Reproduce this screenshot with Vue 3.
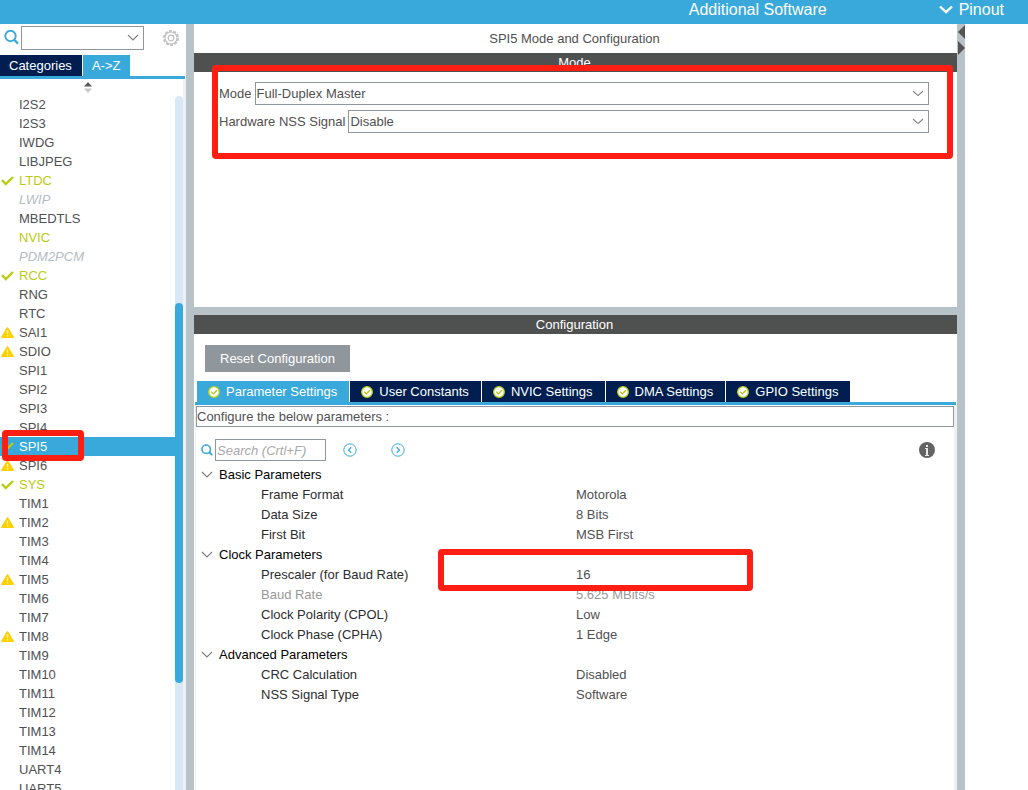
<script setup>
import { ref } from 'vue'

const peripherals = [
  { name: 'I2S2' },
  { name: 'I2S3' },
  { name: 'IWDG' },
  { name: 'LIBJPEG' },
  { name: 'LTDC', state: 'on', icon: 'check' },
  { name: 'LWIP', state: 'off' },
  { name: 'MBEDTLS' },
  { name: 'NVIC', state: 'on' },
  { name: 'PDM2PCM', state: 'off' },
  { name: 'RCC', state: 'on', icon: 'check' },
  { name: 'RNG' },
  { name: 'RTC' },
  { name: 'SAI1', icon: 'warn' },
  { name: 'SDIO', icon: 'warn' },
  { name: 'SPI1' },
  { name: 'SPI2' },
  { name: 'SPI3' },
  { name: 'SPI4' },
  { name: 'SPI5', state: 'selected', icon: 'check', marked: true },
  { name: 'SPI6', icon: 'warn' },
  { name: 'SYS', state: 'on', icon: 'check' },
  { name: 'TIM1' },
  { name: 'TIM2', icon: 'warn' },
  { name: 'TIM3' },
  { name: 'TIM4' },
  { name: 'TIM5', icon: 'warn' },
  { name: 'TIM6' },
  { name: 'TIM7' },
  { name: 'TIM8', icon: 'warn' },
  { name: 'TIM9' },
  { name: 'TIM10' },
  { name: 'TIM11' },
  { name: 'TIM12' },
  { name: 'TIM13' },
  { name: 'TIM14' },
  { name: 'UART4' },
  { name: 'UART5' }
]

const tabs = ['Parameter Settings', 'User Constants', 'NVIC Settings', 'DMA Settings', 'GPIO Settings']
const activeTab = ref('Parameter Settings')

const groups = [
  {
    title: 'Basic Parameters',
    rows: [
      { name: 'Frame Format', value: 'Motorola' },
      { name: 'Data Size', value: '8 Bits' },
      { name: 'First Bit', value: 'MSB First' }
    ]
  },
  {
    title: 'Clock Parameters',
    rows: [
      { name: 'Prescaler (for Baud Rate)', value: '16', marked: true },
      { name: 'Baud Rate', value: '5.625 MBits/s', muted: true },
      { name: 'Clock Polarity (CPOL)', value: 'Low' },
      { name: 'Clock Phase (CPHA)', value: '1 Edge' }
    ]
  },
  {
    title: 'Advanced Parameters',
    rows: [
      { name: 'CRC Calculation', value: 'Disabled' },
      { name: 'NSS Signal Type', value: 'Software' }
    ]
  }
]

const filter = ref('')
const mode = ref('Full-Duplex Master')
const nss = ref('Disable')
const query = ref('')
</script>

<template>
  <div class="app">
    <header class="topbar">
      <button class="top-item" type="button">Additional Software</button>
      <button class="top-item pinout" type="button">
        <svg width="14" height="9" viewBox="0 0 14 9"><path d="M1 1.500 7 7.200 13 1.500" fill="none" stroke="#fff" stroke-width="2.400" /></svg>
        Pinout
      </button>
    </header>

    <div class="workspace">
      <aside class="sidebar">
        <div class="filter">
          <svg class="lens" width="16" height="16" viewBox="0 0 16 16"><circle cx="6.5" cy="6" r="5.2" fill="none" stroke="#39a9dc" stroke-width="1.9" /><path d="M10 9.600 14 13.600" stroke="#39a9dc" stroke-width="2.200" /></svg>
          <span class="combo">
            <select v-model="filter" aria-label="Filter peripherals"><option value=""></option></select>
            <svg class="arrow" width="12" height="7" viewBox="0 0 12 7"><path d="M1 1 6 6 11 1" fill="none" stroke="#808080" stroke-width="1.2" /></svg>
          </span>
          <button class="gear" type="button" aria-label="Settings">
            <svg width="18" height="18" viewBox="0 0 18 18" fill="none" stroke="#c2c2c2">
              <circle cx="9" cy="9" r="7.1" stroke-width="1.8" stroke-dasharray="3 1.46" />
              <circle cx="9" cy="9" r="6" stroke-width="1.1" />
              <circle cx="9" cy="9" r="2.8" stroke-width="1.2" />
            </svg>
          </button>
        </div>
        <nav class="side-tabs">
          <button type="button">Categories</button>
          <button type="button" class="active">A-&gt;Z</button>
        </nav>
        <div class="list-area">
          <div class="list-column">
            <button class="sorter" type="button" aria-label="Sort">
              <svg width="8" height="11" viewBox="0 0 8 11"><path d="M0 4.5 4 0 8 4.5Z" fill="#5a5a5a" /><path d="M0 6.5 4 11 8 6.5Z" fill="#c9c9c9" /></svg>
            </button>
            <ul class="list">
              <li v-for="p in peripherals" :key="p.name" :class="p.state">
                <span class="mark">
                  <svg v-if="p.icon === 'check'" width="13" height="10" viewBox="0 0 13 10"><path d="M1 4.2 4.8 8 12 1" fill="none" stroke="#b9cc10" stroke-width="2.4" /></svg>
                  <svg v-else-if="p.icon === 'warn'" width="13" height="11" viewBox="0 0 13 11"><path d="M6.5.8 12.2 10.2H.8Z" fill="#fdd000" stroke="#fdd000" stroke-width="1.4" stroke-linejoin="round" /><path d="M6.5 3.4V7M6.5 8.1V9.5" stroke="#fff6c0" stroke-width="1.3" /></svg>
                </span>
                {{ p.name }}
                <span v-if="p.marked" class="highlight highlight-item"></span>
              </li>
            </ul>
          </div>
          <div class="track"><div class="thumb"></div></div>
        </div>
      </aside>

      <main class="panel">
        <section class="mode-pane">
          <h1>SPI5 Mode and Configuration</h1>
          <h2>Mode</h2>
          <form class="mode-form">
            <div class="field">
              <label for="mode">Mode</label>
              <span class="combo">
                <select id="mode" v-model="mode"><option>Full-Duplex Master</option></select>
                <svg class="arrow" width="12" height="7" viewBox="0 0 12 7"><path d="M1 1 6 5.6 11 1" fill="none" stroke="#808080" stroke-width="1.1" /></svg>
              </span>
            </div>
            <div class="field">
              <label for="nss">Hardware NSS Signal</label>
              <span class="combo">
                <select id="nss" v-model="nss"><option>Disable</option></select>
                <svg class="arrow" width="12" height="7" viewBox="0 0 12 7"><path d="M1 1 6 5.6 11 1" fill="none" stroke="#808080" stroke-width="1.1" /></svg>
              </span>
            </div>
            <span class="highlight highlight-form"></span>
          </form>
        </section>

        <section class="config-pane">
          <h2>Configuration</h2>
          <button class="reset" type="button">Reset Configuration</button>
          <nav class="tabs">
            <button v-for="t in tabs" :key="t" type="button" :class="{ active: t === activeTab }" @click="activeTab = t">
              <svg width="12" height="12" viewBox="0 0 12 12"><circle cx="6" cy="6" r="5.3" fill="#fff" stroke="#bccf1e" stroke-width="1.3" /><path d="M3.2 5.6 5.4 7.9 8.9 4.2" fill="none" stroke="#b4c70e" stroke-width="1.3" /></svg>
              {{ t }}
            </button>
          </nav>
          <div class="config-body">
            <p class="hint">Configure the below parameters :</p>
            <div class="tools">
              <svg width="12" height="12" viewBox="0 0 12 12"><circle cx="5.2" cy="5.2" r="4.200" fill="none" stroke="#39a9dc" stroke-width="1.6" /><path d="M8 8 11.200 11.200" stroke="#39a9dc" stroke-width="1.9" /></svg>
              <input v-model="query" type="text" placeholder="Search (Crtl+F)" aria-label="Search" />
              <button type="button" aria-label="Previous"><svg width="14" height="14" viewBox="0 0 14 14" fill="none" stroke="#39a9dc"><circle cx="7" cy="7" r="6.2" /><path d="M8.3 4.2 5.5 7 8.3 9.8" stroke-width="1.3" /></svg></button>
              <button type="button" class="next" aria-label="Next"><svg width="14" height="14" viewBox="0 0 14 14" fill="none" stroke="#39a9dc"><circle cx="7" cy="7" r="6.2" /><path d="M5.7 4.2 8.5 7 5.7 9.8" stroke-width="1.3" /></svg></button>
              <button type="button" class="info" aria-label="Information"><svg width="16" height="16" viewBox="0 0 16 16"><circle cx="8" cy="8" r="8" fill="#636363" /><path d="M7 3H9V5H7ZM6 6H9V13H10V14H6V13H7V7H6Z" fill="#e8e8e8" /></svg></button>
            </div>
            <table class="params">
              <tbody v-for="g in groups" :key="g.title">
                <tr>
                  <th colspan="2" scope="rowgroup">
                    <svg width="12" height="7" viewBox="0 0 12 7"><path d="M1 1 6 6 11 1" fill="none" stroke="#808080" stroke-width="1.2" /></svg>{{ g.title }}
                  </th>
                </tr>
                <tr v-for="r in g.rows" :key="r.name" :class="{ muted: r.muted }">
                  <td class="name">{{ r.name }}</td>
                  <td class="value">{{ r.value }}<span v-if="r.marked" class="highlight highlight-value"></span></td>
                </tr>
              </tbody>
            </table>
          </div>
        </section>
      </main>

      <div class="splitter">
        <svg width="8" height="32" viewBox="0 0 8 32"><path d="M8 1V15L1 8Z" fill="#555" /><path d="M1 17V31L8 24Z" fill="#555" /></svg>
      </div>
      <div class="pinout-view"></div>
    </div>
  </div>
</template>

<style>
body {
  background: #fff;
}
</style>

<style scoped>
* {
  box-sizing: border-box;
}
.app {
  display: flex;
  flex-direction: column;
  height: 100vh;
  overflow: hidden;
  font: 13px/19px "Liberation Sans", Arial, sans-serif;
  color: #505052;
}
button,
select,
input {
  font: inherit;
  color: inherit;
  border: 0;
  border-radius: 0;
  background: none;
  padding: 0;
  margin: 0;
}
svg {
  display: block;
  flex: none;
}
h1,
h2,
p,
ul {
  margin: 0;
  padding: 0;
  font-size: 13px;
  font-weight: 400;
}
.topbar {
  flex: none;
  display: flex;
  justify-content: flex-end;
  height: 24px;
  padding-right: 24px;
  background: #39a9dc;
}
.top-item {
  display: flex;
  align-items: center;
  gap: 6px;
  height: 19px;
  color: #fff;
  font-size: 16px;
}
.pinout {
  margin-left: 112px;
}
.workspace {
  flex: 1;
  display: flex;
  min-height: 0;
}

.sidebar {
  flex: none;
  display: flex;
  flex-direction: column;
  width: 194px;
  border-right: 8px solid #b7c3c9;
}
.filter {
  display: flex;
  align-items: center;
  height: 31px;
  padding: 0 6px 3px 4px;
}
.filter .combo {
  flex: none;
  width: 123px;
  height: 24px;
  margin-left: 1px;
}
.gear {
  margin-left: 18px;
}
.combo {
  position: relative;
  flex: 1;
  height: 23px;
}
.combo select {
  appearance: none;
  display: block;
  width: 100%;
  height: 100%;
  padding-left: 1px;
  border: 1px solid #8f979d;
}
.arrow {
  position: absolute;
  right: 5px;
  top: 8px;
  pointer-events: none;
}
.side-tabs {
  flex: none;
  display: flex;
  gap: 1px;
  height: 24px;
  margin-right: 1px;
  border-bottom: 3px solid #39a9dc;
}
.side-tabs button {
  padding: 0 10px 0 9px;
  background: #001f50;
  color: #fff;
}
.side-tabs .active {
  background: #39a9dc;
}
.list-area {
  flex: 1;
  display: flex;
  min-height: 0;
  border-right: 3px solid #eef0f4;
}
.list-column {
  flex: 1;
  overflow: hidden;
}
.sorter {
  display: block;
  height: 16px;
  margin: 0 auto;
}
.list {
  list-style: none;
}
.list li {
  position: relative;
  display: flex;
  height: 19px;
  white-space: nowrap;
}
.mark {
  display: flex;
  align-items: center;
  width: 19px;
  padding-left: 1px;
}
.list .on {
  color: #b9cc10;
}
.list .off {
  color: #b3bcc3;
  font-style: italic;
}
.list .selected {
  background: #39a9dc;
  color: #fff;
}
.track {
  flex: none;
  width: 8px;
  margin-top: 17px;
  padding-top: 207px;
  border-radius: 4px 4px 0 0;
  background: #d9e8f5;
}
.thumb {
  height: 380px;
  border-radius: 4px;
  background: #39a9dc;
}

.panel {
  flex: 1;
  display: flex;
  flex-direction: column;
  min-width: 0;
}
h1,
h2 {
  padding-right: 2px;
  text-align: center;
}
h1 {
  height: 29px;
  line-height: 29px;
}
h2 {
  height: 19px;
  line-height: 19px;
  color: #fff;
  background: #4f5150;
}
.mode-pane {
  flex: none;
  height: 291px;
  border-bottom: 8px solid #b7c3c9;
}
.mode-form {
  position: relative;
  display: flex;
  flex-direction: column;
  gap: 5px;
  padding: 10px 28px 0 25px;
}
.field {
  display: flex;
  align-items: center;
  gap: 3px;
}
.highlight {
  position: absolute;
  z-index: 2;
  border: 6px solid #ff1f12;
  border-radius: 4px;
  pointer-events: none;
}
.highlight-form {
  inset: -7px 4px -26px 18px;
}
.highlight-item {
  left: 2px;
  top: -7px;
  width: 82px;
  height: 31px;
}
.highlight-value {
  left: -137px;
  top: -16px;
  width: 315px;
  height: 42px;
}

.config-pane {
  flex: 1;
  display: flex;
  flex-direction: column;
  min-height: 0;
}
.reset {
  align-self: flex-start;
  height: 27px;
  margin: 11px 0 9px 11px;
  padding: 0 15px;
  background: #8f979d;
  color: #fff;
}
.tabs {
  display: flex;
  gap: 1px;
  height: 24px;
  margin: 0 1px;
  padding-left: 2px;
  border-bottom: 3px solid #39a9dc;
}
.tabs button {
  display: flex;
  align-items: center;
  gap: 6px;
  padding: 0 12px 0 11px;
  background: #001f50;
  color: #fff;
}
.tabs .active {
  background: #39a9dc;
}
.config-body {
  flex: 1;
  margin-left: 1px;
  padding-top: 1px;
  border-left: 1px solid #eef0f4;
  border-right: 3px solid #eef0f4;
}
.hint {
  height: 21px;
  border: 1px solid #8f979d;
}
.tools {
  display: flex;
  align-items: center;
  padding: 12px 19px 0 5px;
}
.tools input {
  width: 111px;
  height: 22px;
  margin: 0 17px 0 2px;
  padding-left: 1px;
  border: 1px solid #8f979d;
}
.tools input::placeholder {
  color: #a9a9a9;
  font-style: italic;
  opacity: 1;
}
.tools .next {
  margin-left: 34px;
}
.tools .info {
  margin-left: auto;
}
.params {
  width: 100%;
  margin-top: 4px;
  table-layout: fixed;
  border-collapse: collapse;
  text-align: left;
}
.params th,
.params td {
  width: 50%;
  height: 20px;
  padding: 0;
  line-height: 20px;
  font-weight: 400;
}
.params th {
  color: #000;
}
.params th svg {
  display: inline-block;
  margin: 0 6px 3px 5px;
  vertical-align: middle;
}
.params .name {
  padding-left: 65px;
  color: #2c2c2e;
}
.params .value {
  position: relative;
  padding-left: 1px;
}
.params .muted td {
  color: #999;
}

.splitter {
  flex: none;
  width: 8px;
  background: #b7c3c9;
}
.pinout-view {
  flex: none;
  width: 63px;
}
</style>
